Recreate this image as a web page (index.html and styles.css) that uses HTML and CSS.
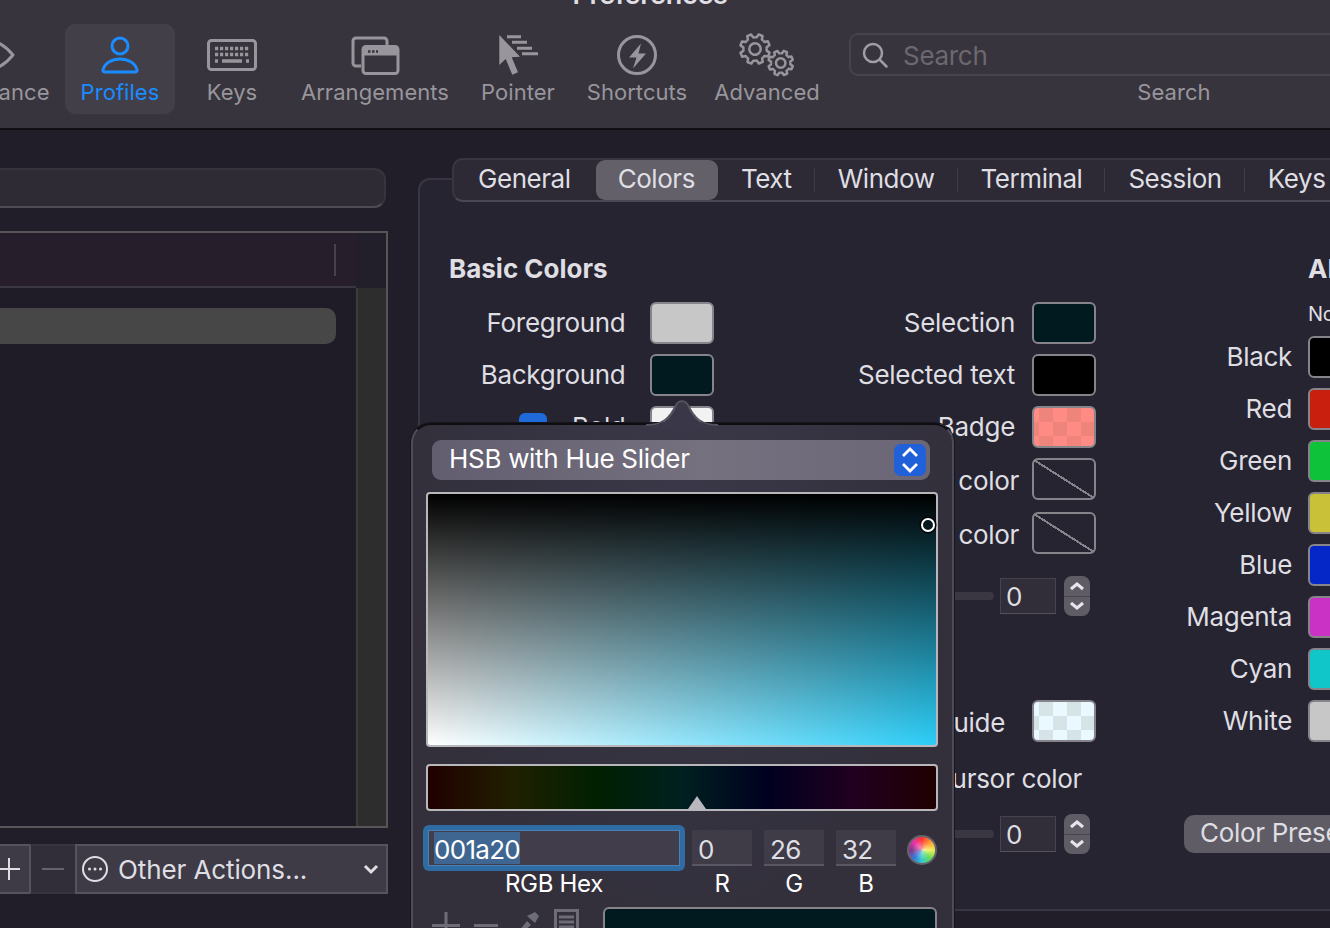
FILE: index.html

```html
<!DOCTYPE html>
<html lang="en">
<head>
  <meta charset="UTF-8">
  <title>Preferences</title>
  <link rel="stylesheet" href="styles.css">
</head>
<body>
  <div class="window">
    <header class="toolbar">
      <div class="title">Preferences</div>
      <div class="tools">
        <div class="tool tool-appearance">
          <svg class="ico" viewBox="0 0 60 46"><path d="M3 23C12 12 20 8 30 8s18 4 27 15c-9 11-17 15-27 15S12 34 3 23z"/></svg>
          <span>Appearance</span>
        </div>
        <div class="tool tool-profiles active">
          <svg class="ico" viewBox="0 0 60 46"><circle cx="30" cy="14" r="8"/><path d="M15 40h30c1.500 0 2.500-1 2-2.500C45 31 38 27 30 27s-15 4-17 10.500c-.5 1.500.5 2.500 2 2.500z"/></svg>
          <span>Profiles</span>
        </div>
        <div class="tool tool-keys">
          <svg class="ico" viewBox="0 0 60 46">
            <rect x="6.500" y="8.500" width="47" height="29" rx="3"/>
            <path class="dots" d="M13 16.500H48M13 22.500H48"/>
            <path class="thick" d="M13 29h3M20 29h20M44 29h3"/>
          </svg>
          <span>Keys</span>
        </div>
        <div class="tool tool-arrangements">
          <svg class="ico" viewBox="0 0 60 46">
            <path d="M16 34h-5a3 3 0 0 1-3-3V9a3 3 0 0 1 3-3h28a3 3 0 0 1 3 3v4"/>
            <rect x="18" y="14.500" width="35" height="27" rx="3"/>
            <path class="fill" d="M18 17.500a3 3 0 0 1 3-3h29a3 3 0 0 1 3 3v6H18z"/>
            <path class="bar-dots" d="M23 19.500h10"/>
          </svg>
          <span>Arrangements</span>
        </div>
        <div class="tool tool-pointer">
          <svg class="ico" viewBox="0 0 60 46">
            <path class="fill" d="M11.300 3v30l6.400-6 6.600 15.700 5.700-2.400-6.300-15 8.300-.6z"/>
            <path d="M19 4.700h14M24 10.300h15M29 16.300h15M34 21.700h16"/>
          </svg>
          <span>Pointer</span>
        </div>
        <div class="tool tool-shortcuts">
          <svg class="ico" viewBox="0 0 60 46">
            <circle cx="30" cy="23" r="18.500"/>
            <path class="fill" d="M34 11.500 22 25.500h7.500L26 36.500l13-15h-7.500z"/>
          </svg>
          <span>Shortcuts</span>
        </div>
        <div class="tool tool-advanced">
          <svg class="ico" viewBox="0 0 60 46">
            <defs>
              <g id="tooth"><path vector-effect="non-scaling-stroke" d="M72 -30 76 -19 99 -14V14L76 19 72 30"/></g>
              <g id="gear">
                <use href="#tooth"/>
                <use href="#tooth" transform="rotate(45)"/>
                <use href="#tooth" transform="rotate(90)"/>
                <use href="#tooth" transform="rotate(135)"/>
                <use href="#tooth" transform="rotate(180)"/>
                <use href="#tooth" transform="rotate(225)"/>
                <use href="#tooth" transform="rotate(270)"/>
                <use href="#tooth" transform="rotate(315)"/>
                <circle vector-effect="non-scaling-stroke" r="38"/>
              </g>
            </defs>
            <use href="#gear" transform="translate(18 17) rotate(22) scale(.15)" class="thin"/>
            <use href="#gear" transform="translate(43.700 31) rotate(22) scale(.125)" class="thin"/>
          </svg>
          <span>Advanced</span>
        </div>
        <div class="tool-search">
          <div class="search-box">
            <svg class="search-ico" width="28" height="28" viewBox="0 0 28 28"><circle cx="12" cy="12" r="9"/><path d="M19 19l6.500 6.500"/></svg>
            <span>Search</span>
          </div>
          <div class="search-label">Search</div>
        </div>
      </div>
    </header>

    <main class="main">
      <section class="profiles">
        <div class="filter"></div>
        <div class="table">
          <div class="table-main">
            <div class="table-head"><i></i></div>
            <div class="table-row"></div>
          </div>
          <div class="scroller"><div class="scroller-top"></div></div>
        </div>
        <div class="actions">
          <div class="act act-add"><svg width="22" height="22" viewBox="0 0 22 22"><path d="M11 0v22M0 11h22"/></svg></div>
          <div class="act act-del"><svg width="22" height="22" viewBox="0 0 22 22"><path d="M0 11h22"/></svg></div>
          <div class="act act-other">
            <svg class="more" width="28" height="28" viewBox="0 0 28 28"><circle cx="14" cy="14" r="12"/><path class="more-dots" d="M8.500 14h.01M14 14h.01M19.500 14h.01"/></svg>
            <span>Other Actions...</span>
            <svg class="chev" width="16" height="12" viewBox="0 0 16 12"><path d="M2 3l6 6 6-6"/></svg>
          </div>
        </div>
      </section>

      <section class="prefs">
        <nav class="tabs">
          <span class="tab">General</span>
          <span class="tab on">Colors</span>
          <span class="tab sep">Text</span>
          <span class="tab sep">Window</span>
          <span class="tab sep">Terminal</span>
          <span class="tab sep">Session</span>
          <span class="tab">Keys</span>
        </nav>
        <div class="panel">
          <div class="col col-basic">
            <h2>Basic Colors</h2>
            <div class="row"><label>Foreground</label><b class="swatch c-fg"></b></div>
            <div class="row"><label>Background</label><b class="swatch c-bg"></b></div>
            <div class="row"><em class="check"></em><label>Bold</label><b class="swatch c-bold"></b></div>
          </div>

          <div class="col col-extra">
            <div class="row"><label>Selection</label><b class="swatch c-bg"></b></div>
            <div class="row"><label>Selected text</label><b class="swatch c-black"></b></div>
            <div class="row"><label>Badge</label><b class="swatch c-badge"></b></div>
            <div class="row row-tight"><label>Tab color</label><b class="swatch c-none"></b></div>
            <div class="row row-tight"><label>Underline color</label><b class="swatch c-none"></b></div>
            <div class="row-num num-a">
              <div class="slider"></div>
              <div class="num">0</div>
              <div class="stepper"><svg width="26" height="40" viewBox="0 0 26 40"><path d="M7 13l6-5 6 5M7 27l6 5 6-5"/></svg></div>
            </div>
            <div class="row row-guide"><label>Cursor guide</label><b class="swatch c-guide"></b></div>
            <div class="row-text">Smart box cursor color</div>
            <div class="row-num num-b">
              <div class="slider"></div>
              <div class="num">0</div>
              <div class="stepper"><svg width="26" height="40" viewBox="0 0 26 40"><path d="M7 13l6-5 6 5M7 27l6 5 6-5"/></svg></div>
            </div>
          </div>

          <div class="col col-ansi">
            <h2>ANSI Colors</h2>
            <div class="ansi-head">Normal</div>
            <div class="row"><label>Black</label><b class="swatch c-black"></b></div>
            <div class="row"><label>Red</label><b class="swatch c-red"></b></div>
            <div class="row"><label>Green</label><b class="swatch c-green"></b></div>
            <div class="row"><label>Yellow</label><b class="swatch c-yellow"></b></div>
            <div class="row"><label>Blue</label><b class="swatch c-blue"></b></div>
            <div class="row"><label>Magenta</label><b class="swatch c-magenta"></b></div>
            <div class="row"><label>Cyan</label><b class="swatch c-cyan"></b></div>
            <div class="row"><label>White</label><b class="swatch c-fg"></b></div>
            <div class="presets">Color Presets...</div>
          </div>
        </div>
      </section>
    </main>

    <aside class="popover">
      <svg class="pop-arrow" width="72" height="30" viewBox="0 0 72 30"><path class="pop-arrow-fill" d="M0 28C16 28 24 22 30 8c3-5 9-5 12 0 6 14 14 20 30 20v2H0z"/><path class="pop-arrow-line" d="M0 27C16 27 24 21 30 7c3-5 9-5 12 0 6 14 14 20 30 20"/></svg>
      <div class="picker-mode">
        <span>HSB with Hue Slider</span>
        <div class="mode-btn"><svg width="20" height="28" viewBox="0 0 20 28"><path d="M3 10l7-7 7 7M3 18l7 7 7-7"/></svg></div>
      </div>
      <div class="sat-box"><i class="sat-thumb"></i></div>
      <div class="hue-box"><i class="hue-thumb"></i></div>
      <div class="values">
        <div class="hex"><div class="hex-in"><span>001a20</span></div></div>
        <div class="val">0</div>
        <div class="val">26</div>
        <div class="val">32</div>
        <div class="wheel"></div>
        <div class="cap cap-hex">RGB Hex</div>
        <div class="cap">R</div>
        <div class="cap">G</div>
        <div class="cap">B</div>
      </div>
      <div class="pop-foot">
        <div class="pop-tools">
          <svg width="176" height="24" viewBox="0 0 176 24">
            <path d="M19 5v19M5 18.500h28M47 18.500h24"/>
            <path class="drop" d="M92 24l8-10 4 4-8 7zM100 9l8-4 4 4-4 7z"/>
            <rect x="128.500" y="3.500" width="22" height="24"/>
            <path d="M132 10h15M132 15h15M132 20h15"/>
          </svg>
        </div>
        <div class="pop-swatch"></div>
      </div>
    </aside>
  </div>
</body>
</html>
```

FILE: styles.css

```css
* { box-sizing: border-box; }
html, body { margin: 0; padding: 0; }
body { font-family: Inter, "Noto Sans", sans-serif; background: #211e2a; color: #dfdee3; letter-spacing: -.3px; }
.window { position: relative; width: 1330px; height: 928px; overflow: hidden; background: #211e2a; }

/* toolbar */
.toolbar { display: flow-root; height: 129px; background: #37343d; border-bottom: 1px solid #0f0e12; box-shadow: 0 1px 0 #0f0e12; }
.title { height: 24px; margin-top: -17px; width: 1300px; text-align: center; font-size: 27px; font-weight: 600; line-height: 24px; color: #dfdee3; }
.tools { display: flex; margin-top: 17px; margin-left: -79px; }
.tool { height: 90px; flex: none; display: flex; flex-direction: column; align-items: center; padding-top: 8px; font-size: 22px; line-height: 24px; color: #98969c; letter-spacing: .05px; border-radius: 10px; }
.tool span { margin-top: 2px; white-space: nowrap; }
.tool-appearance { width: 130px; margin-right: 14px; }
.tool-profiles { width: 110px; }
.tool-keys { width: 114px; }
.tool-arrangements { width: 172px; }
.tool-pointer { width: 114px; }
.tool-shortcuts { width: 124px; }
.tool-advanced { width: 136px; }
.active { background: #423f49; color: #1a8cff; }
.ico { width: 60px; height: 46px; fill: none; stroke: currentColor; stroke-width: 3; stroke-linejoin: round; }
.ico .fill { fill: currentColor; stroke: none; }
.ico .dots { stroke-dasharray: 3.200 1.800; stroke-width: 3.500; }
.ico .thick { stroke-width: 3.500; }
.ico .bar-dots { stroke: #37343d; stroke-dasharray: 2.500 1.500; stroke-width: 2.500; }
.ico .thin { stroke-width: 2.500; }
.tool-search { flex: none; margin-left: 14px; width: 650px; padding-top: 9px; }
.search-box { height: 43px; border: 2px solid #46434d; border-radius: 9px; display: flex; align-items: center; padding-left: 10px; font-size: 26px; color: #6b696f; }
.search-box span { position: relative; top: 1px; }
.search-ico { fill: none; stroke: #a09ea5; stroke-width: 2.500; stroke-linecap: round; margin-right: 14px; }
.search-label { margin-top: 4px; text-align: center; font-size: 22px; line-height: 24px; color: #98969c; letter-spacing: .05px; }

/* main area */
.main { display: flex; }
.profiles { width: 388px; flex: none; padding-top: 39px; }
.filter { height: 40px; width: 396px; margin-left: -10px; background: #2e2b35; border: 2px solid #37343e; border-bottom-color: #4f4c56; border-radius: 0 12px 12px 0; }
.table { display: flex; height: 597px; margin: 23px 0 16px -10px; width: 398px; border: 2px solid #565558; background: #1f1c27; }
.table-main { flex: 1; }
.table-head { height: 55px; background: #261f2b; border-bottom: 2px solid #3a3642; position: relative; padding: 11px 0 0 342px; }
.table-head i { display: block; width: 2px; height: 32px; background: #45424c; }
.table-row { height: 36px; margin: 20px 20px 0 0; background: #474747; border-radius: 0 10px 10px 0; }
.scroller { width: 30px; background: #2e2d2d; border-left: 2px solid #3d3c3c; }
.scroller-top { height: 55px; margin-left: -2px; background: #221f2a; }
.actions { display: flex; height: 50px; margin-left: -10px; }
.act { display: flex; align-items: center; border: 2px solid #56535e; background: #3e3b46; }
.act svg { fill: none; stroke: #dfdee3; stroke-width: 2; }
.act-add { width: 40px; padding-left: 6px; border-right-width: 1px; }
.act-del { width: 45px; background: #322e39; border-left: 1px solid #56535e; border-right: 0; border-top-color: #37343e; border-bottom-color: #37343e; justify-content: center; }
.act-del svg { stroke: #66636d; }
.act-other { flex: 1; padding-left: 4px; font-size: 26px; color: #dfdee3; }
.act-other span { margin-left: 9px; flex: 1; letter-spacing: -.1px; }
.act-other .chev { stroke-width: 3; margin-right: 7px; }
.more-dots { stroke-width: 3; stroke-linecap: round; }

/* profile settings */
.prefs { margin-left: 30px; flex: none; width: 1100px; }
.tabs { position: relative; z-index: 1; display: flex; align-items: center; height: 44px; margin: 29px 0 0 34px; background: #2d2a36; border: 2px solid #393641; border-bottom-color: #4a4753; border-radius: 11px; padding-left: 1px; font-size: 26px; color: #dfdee3; letter-spacing: -.45px; }
.tab { padding: 0 23px; height: 40px; line-height: 38px; position: relative; flex: none; }
.tab.on { background: #63606a; border-radius: 9px; padding: 0 23px 0 22px; margin-left: 2px; }
.tab.sep::after { content: ""; position: absolute; right: 0; top: 8px; width: 1px; height: 24px; background: #3f3c48; }
.panel { display: flex; margin-top: -24px; height: 733px; padding: 75px 0 0 29px; background: #272431; border: 2px solid #393641; border-radius: 12px 0 0 0; border-right: 0; }
.col { flex: none; }
.col-basic { width: 265px; }
.col-extra { width: 382px; padding-top: 47px; }
.col-ansi { width: 276px; }
h2 { margin: 0 0 19px; height: 28px; line-height: 28px; font-size: 26px; font-weight: 700; color: #dfdee3; white-space: nowrap; letter-spacing: 0; }
.col-ansi h2 { margin-left: 212px; }
.row { display: flex; justify-content: flex-end; align-items: center; gap: 24.500px; height: 42px; margin-bottom: 10px; white-space: nowrap; }
.col-extra .row { gap: 17px; }
.col-extra .row-tight { gap: 13px; margin-bottom: 12px; }
.col-extra .row-tight label, .col-extra .row-guide label { position: relative; top: 2px; }
.col-extra .row-guide { margin: 84px 0 24px; gap: 27px; }
.row-text { height: 26px; line-height: 26px; text-align: right; padding-right: 14px; font-size: 26px; white-space: nowrap; }
label { font-size: 26px; line-height: 30px; color: #dfdee3; }
.swatch { display: block; flex: none; width: 64px; height: 42px; border: 2px solid #86848a; border-radius: 6px; }
.c-fg { background: #c7c7c7; }
.c-bg { background: #001a20; }
.c-black { background: #000; }
.c-bold { background: #f2f2f2; }
.c-red { background: #c91f0f; }
.c-green { background: #0ec23a; }
.c-yellow { background: #c9c137; }
.c-blue { background: #0627c8; }
.c-magenta { background: #ca32c5; }
.c-cyan { background: #10c6c9; }
.c-none { background: linear-gradient(to top right, transparent calc(50% - 1px), #86848a calc(50% - 1px), #86848a calc(50% + 1px), transparent calc(50% + 1px)); }
.c-badge { background: repeating-conic-gradient(#ff8c84 0 25%, #ee847c 0 50%) 5px 0 / 28px 28px; }
.c-guide { background: repeating-conic-gradient(#e9f9ff 0 25%, #d6e4e8 0 50%) 5px 0 / 28px 28px; }
.check { display: block; width: 28px; height: 28px; border-radius: 6px; background: #1d6ad8; }
.row-num { display: flex; justify-content: flex-end; align-items: center; height: 40px; padding-right: 6px; }
.num-a { margin-top: 22px; }
.num-b { margin-top: 22px; }
.slider { width: 100px; height: 8px; border-radius: 4px; background: #3a3743; margin-right: 6px; }
.num { width: 56px; height: 36px; padding-left: 5px; line-height: 36px; font-size: 26px; background: #322e39; border: 1px solid #46434e; border-bottom-color: #55525c; }
.stepper { width: 26px; height: 40px; margin-left: 8px; border-radius: 8px; background: linear-gradient(#5f5c66 49%, #48454f 49%, #48454f 52%, #5f5c66 52%); }
.stepper svg { display: block; fill: none; stroke: #e6e5ea; stroke-width: 3; }
.ansi-head { height: 24px; margin: 1px 0 10px 212px; font-size: 20px; line-height: 24px; }
.col-ansi .row { gap: 16px; }
.presets { margin: 73px 0 0 88px; width: 220px; height: 38px; padding-left: 16px; line-height: 36px; font-size: 26px; background: #5f5c66; border-radius: 10px; white-space: nowrap; }

/* colour picker popover */
.popover { position: absolute; left: 411px; top: 423px; width: 543px; height: 530px; padding: 15px 15px 0 14px; background: radial-gradient(ellipse at 50% 10%, #3a3748, #33303c 70%); border: 2px solid #4f4c58; border-top-color: #0e0d12; border-radius: 20px 20px 0 0; box-shadow: 0 0 0 1px #18161d; }
.pop-arrow { position: absolute; left: 233px; top: -27px; }
.pop-arrow-fill { fill: #3a3748; }
.pop-arrow-line { fill: none; stroke: #55525e; stroke-width: 2; }
.picker-mode { display: flex; align-items: center; justify-content: space-between; height: 40px; width: 498px; margin: 0 0 13px 5px; padding: 0 4px 0 17px; border-radius: 9px; background: linear-gradient(90deg, #625e70, #75717f 55%, #6a6676); font-size: 26px; color: #fff; }
.picker-mode span { position: relative; top: -2px; }
.mode-btn { display: flex; align-items: center; justify-content: center; width: 32px; height: 32px; border-radius: 7px; background: #2060d8; }
.mode-btn svg { fill: none; stroke: #fff; stroke-width: 2.800; }
.sat-box { position: relative; height: 255px; border: 2px solid #b8b7bb; border-radius: 4px; margin: -1px -1px 18px; background: linear-gradient(#000, rgba(0,0,0,0)), linear-gradient(90deg, #fff, #2ccdf7); }
.sat-thumb { position: absolute; right: 1px; top: 24px; width: 14px; height: 14px; border: 2px solid #fff; border-radius: 50%; box-shadow: 0 0 0 1.500px #000; }
.hue-box { position: relative; height: 47px; margin: -1px -1px 14px; border: 2px solid #b8b7bb; border-radius: 4px; background: linear-gradient(90deg, #200000, #202000 16.700%, #002000 33.300%, #002020 50%, #000020 66.700%, #200020 83.300%, #200000); }
.hue-thumb { position: absolute; left: 260px; bottom: 0; width: 18px; height: 13px; background: #b9b8bc; clip-path: polygon(50% 0, 100% 100%, 0 100%); }
.values { display: grid; grid-template-columns: 262px 60px 60px 60px 42px; column-gap: 0; margin-left: -4px; }
.values > :nth-child(2), .values > :nth-child(7) { margin-left: 7px; width: 60px; }
.values > :nth-child(3), .values > :nth-child(8) { margin-left: 19px; width: 60px; }
.values > :nth-child(4), .values > :nth-child(9) { margin-left: 31px; width: 60px; }
.hex { height: 46px; padding: 5px; background: #2e6ca3; border-radius: 6px; }
.hex-in { height: 36px; padding-left: 5px; line-height: 38px; font-size: 26px; background: #413d4a; border: 1px solid #4a82b5; color: #fff; letter-spacing: -.7px; }
.hex-in span { background: #3e6690; display: inline-block; height: 32px; line-height: 36px; margin-top: 1px; vertical-align: top; }
.val { height: 36px; margin-top: 5px; padding-left: 6px; line-height: 39px; font-size: 26px; background: #3f3c48; border-bottom: 2px solid #5a5763; color: #dfdee3; letter-spacing: -.7px; }
.wheel { width: 30px; height: 30px; margin: 10px 0 0 42px; border-radius: 50%; border: 2px solid #66646a; background: radial-gradient(circle, rgba(255,255,255,.5), rgba(255,255,255,0) 55%), conic-gradient(#f33, #f93, #ee5, #6d5, #3cc, #37d, #838, #e3a, #f33); }
.cap { text-align: center; height: 26px; line-height: 26px; font-size: 24px; color: #fff; }
.cap-hex { grid-column: 1; }
.pop-foot { display: flex; margin-top: 10px; }
.pop-tools { width: 176px; }
.pop-tools svg { display: block; fill: none; stroke: #6e6c74; stroke-width: 3; overflow: visible; }
.pop-tools .drop { fill: #6e6c74; stroke: none; }
.pop-swatch { width: 334px; height: 60px; background: #001a20; border: 2px solid #86848a; border-radius: 6px 6px 0 0; }
```
